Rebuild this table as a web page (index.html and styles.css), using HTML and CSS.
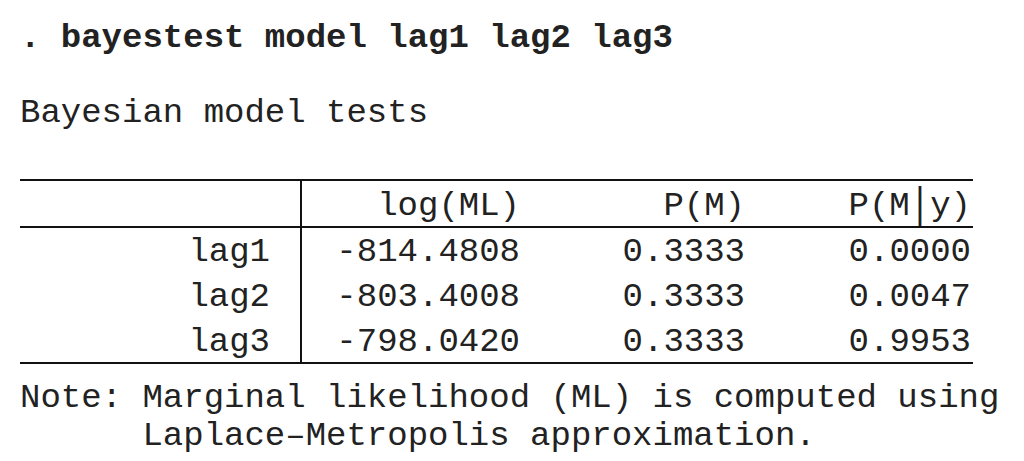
FILE: index.html
```html
<!DOCTYPE html>
<html lang="en">
<head>
  <meta charset="UTF-8" />
  <meta name="viewport" content="width=device-width, initial-scale=1.0"/>
  <title>bayestest model</title>
  <link rel="stylesheet" href="styles.css">
</head>
<body>

  <!-- Commande -->
  <div class="cmd">. bayestest model lag1 lag2 lag3</div>

  <div class="title">Bayesian model tests</div>

  <!-- Tableau -->
  <table class="results">
    <colgroup>
      <col class="c-label">
      <col class="c-ml">
      <col class="c-pm">
      <col class="c-pmy">
    </colgroup>
    <thead>
      <tr>
        <th></th>
        <th class="sep">log(ML)</th>
        <th>P(M)</th>
        <th>P(M<span class="bar">|</span>y)</th>
      </tr>
    </thead>
    <tbody>
      <tr>
        <td>lag1</td>
        <td class="sep">-814.4808</td>
        <td>0.3333</td>
        <td>0.0000</td>
      </tr>
      <tr>
        <td>lag2</td>
        <td class="sep">-803.4008</td>
        <td>0.3333</td>
        <td>0.0047</td>
      </tr>
      <tr>
        <td>lag3</td>
        <td class="sep">-798.0420</td>
        <td>0.3333</td>
        <td>0.9953</td>
      </tr>
    </tbody>
  </table>

  <div class="note">Note: Marginal likelihood (ML) is computed using
      Laplace–Metropolis approximation.</div>

</body>
</html>
```

FILE: styles.css
```css
* {
  margin: 0;
  padding: 0;
  box-sizing: border-box;
}
body {
  font-family: 'Liberation Mono', 'Courier New', monospace;
  font-size: 34px;
  color: #222;
  background: #fff;
  padding: 16px 0 0 20px;
}

.cmd {
  font-weight: bold;
  line-height: 45px;
  white-space: pre;
}
.title {
  line-height: 45px;
  margin-top: 30px;
  white-space: pre;
}

/* Tableau */
.results {
  margin-top: 43px;
  width: 953px;
  table-layout: fixed;
  border-collapse: separate;
  border-spacing: 0;
}
.c-label { width: 280px; }
.c-ml { width: 220px; }
.c-pm { width: 225px; }
.c-pmy { width: 228px; }

.results th,
.results td {
  text-align: right;
  font-weight: normal;
  white-space: pre;
  padding: 0;
}
.results th {
  line-height: 40px;
  padding-top: 5px;
  border-top: 2px solid #111;
  border-bottom: 2px solid #111;
}
.results td {
  line-height: 39px;
  padding: 3px 0;
}
.results tr > :first-child {
  padding-right: 30px;
}
.results tr > :last-child {
  padding-right: 2px;
}
.results tbody tr:first-child td {
  padding-top: 5px;
}
.results tbody tr:last-child td {
  padding-bottom: 0;
  border-bottom: 2px solid #111;
}
.results .sep {
  border-left: 2px solid #111;
}
.bar {
  display: inline-block;
  transform: scaleY(1.25);
}

.note {
  margin-top: 15px;
  line-height: 38px;
  white-space: pre;
}
```
